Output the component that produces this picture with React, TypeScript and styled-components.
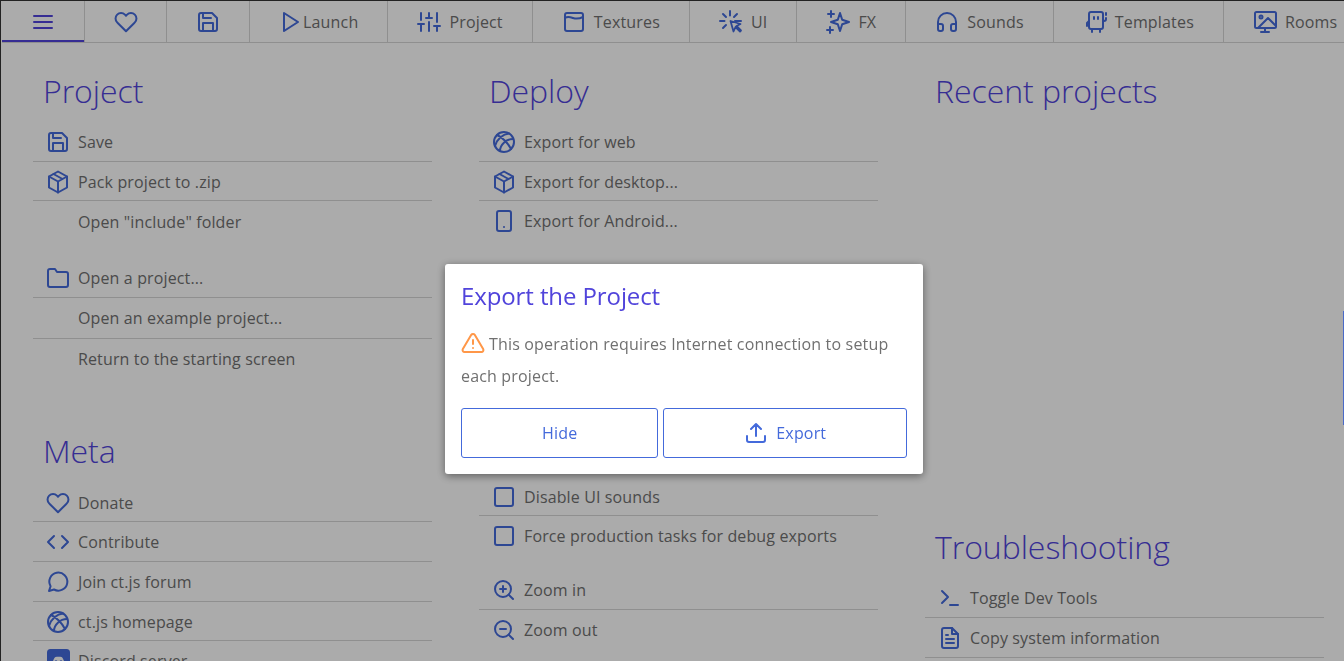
import React from "react";
import styled, { createGlobalStyle } from "styled-components";

const Global = createGlobalStyle`
    html, body {
        margin: 0;
        height: 100%;
        overflow: hidden;
        background: #fff;
    }
    body {
        font-family: "Open Sans", "Liberation Sans", sans-serif;
        font-size: 16px;
        letter-spacing: 0.13px;
        color: #707070;
    }
`

const Frame = styled.div`
    height: 661px;
    overflow: hidden;
    box-sizing: border-box;
    border-top: 1px solid #333;
    border-left: 1px solid #333;
    padding-left: 1px;
`
const Nav = styled.nav`
    display: flex;
    height: 41px;
    border-bottom: 1px solid #d5d5d5;
    box-sizing: content-box;
    white-space: nowrap;
`
const Tab = styled.div<{ $active?: boolean }>`
    display: flex;
    align-items: center;
    gap: 8px;
    flex: none;
    padding: 0 29px;
    border-right: 1px solid #d5d5d5;
    color: #707070;
    box-sizing: border-box;
    height: 41px;
    line-height: 1;
    letter-spacing: 0.17px;
    box-shadow: ${p => p.$active ? "inset 0 -2px 0 #5144db" : "none"};
`
const IconTab = styled(Tab)`
    padding: 0 28.5px 0 29px;
`
const TightTab = styled(Tab)`
    gap: 0;
    padding: 0 29px 0 29.5px;
`
const Columns = styled.main`
    display: grid;
    grid-template-columns: repeat(3, 399px);
    column-gap: 47px;
    padding: 24px 0 0 31px;
`
const Column = styled.div`
    display: flex;
    flex-direction: column;
`
const Heading = styled.h1<{ $top?: number }>`
    margin: ${p => p.$top ?? 0}px 0 7px 10px;
    font-weight: 300;
    font-size: 32px;
    line-height: 48px;
    letter-spacing: -0.05px;
    color: #5144db;
`
const List = styled.ul<{ $top?: number }>`
    list-style: none;
    margin: ${p => p.$top ?? 0}px 0 0;
    padding: 0;
`
const Row = styled.li`
    display: flex;
    align-items: center;
    gap: 8px;
    height: 37.7px;
    box-sizing: content-box;
    padding: 1px 0 0 13px;
    border-bottom: 1px solid #d5d5d5;
    color: #707070;
    line-height: 1;
    &:last-child {
        border-bottom: none;
    }
`
const PlainRow = styled(Row)`
    padding-left: 45px;
    height: 39px;
`
const Blue = styled.svg<{ $color?: string }>`
    width: 24px;
    height: 24px;
    flex: none;
    fill: none;
    stroke: ${p => p.$color ?? "#446adb"};
    stroke-width: 2;
    stroke-linecap: round;
    stroke-linejoin: round;
`
const Overlay = styled.div`
    position: fixed;
    inset: 0;
    background: rgba(0, 0, 0, 0.33);
`
const Thumb = styled.div`
    position: fixed;
    right: 0;
    top: 311px;
    width: 1px;
    height: 114px;
    background: #4a6ac8;
`
const Modal = styled.section`
    position: fixed;
    left: 445px;
    top: 264px;
    width: 478px;
    height: 210px;
    box-sizing: border-box;
    padding: 16px;
    background: #fff;
    border-radius: 3px;
    box-shadow: 0 2px 8px rgba(0, 0, 0, 0.45);
`
const ModalTitle = styled.h2`
    margin: 0;
    font-weight: 400;
    font-size: 24px;
    line-height: 32px;
    letter-spacing: -0.1px;
    color: #5144db;
`
const ModalText = styled.p`
    margin: 16px 0 16px;
    line-height: 32px;
    letter-spacing: 0.17px;
    color: #707070;
    svg {
        vertical-align: -5px;
        margin-right: 4px;
    }
`
const Buttons = styled.div`
    display: flex;
    gap: 5px;
`
const Button = styled.button`
    display: flex;
    align-items: center;
    justify-content: center;
    gap: 8px;
    height: 50px;
    padding: 0 80px;
    background: #fff;
    border: 1px solid #446adb;
    border-radius: 3px;
    color: #446adb;
    font: inherit;
    letter-spacing: 0.17px;
`

type IconProps = { color?: string; children: React.ReactNode };
const Icon = ({ color, children }: IconProps) => (
    <Blue viewBox="0 0 24 24" $color={color}>{children}</Blue>
);

const IconMenu = ({ color }: { color?: string }) => (
    <Icon color={color}><path d="M3 12h18M3 6h18M3 18h18" /></Icon>
);
const IconHeart = () => (
    <Icon><path d="M20.84 4.61a5.5 5.5 0 0 0-7.78 0L12 5.67l-1.06-1.06a5.5 5.5 0 0 0-7.78 7.78l1.06 1.06L12 21.23l7.78-7.78 1.06-1.06a5.5 5.5 0 0 0 0-7.78z" /></Icon>
);
const IconSave = () => (
    <Icon><path d="M19 21H5a2 2 0 0 1-2-2V5a2 2 0 0 1 2-2h11l5 5v11a2 2 0 0 1-2 2z" /><path d="M17 21v-8H7v8M7 3v5h8" /></Icon>
);
const IconPlay = () => (
    <Icon><path d="M5 3l14 9-14 9V3z" /></Icon>
);
const IconSliders = () => (
    <Icon><path d="M4 21v-7M4 10V3M12 21v-9M12 8V3M20 21v-5M20 12V3M1 14h6M9 8h6M17 16h6" /></Icon>
);
const IconTexture = () => (
    <Icon><rect x="3" y="3" width="18" height="18" rx="2" /><path d="M3 8c3-2 5-1 8 0s6 1 10-1" /></Icon>
);
const IconClick = () => (
    <Icon><path d="M11.500 11l3 10.500 2-4.500 4.500 4.500 1-1-4.500-4.500 4-2-10-3z" strokeWidth="1.8" /><path d="M11 1v4.500M1 11h4.500M16 11h6M4 4l3 3M4 18l3-3M18 4l-3 3" /></Icon>
);
const IconSparkles = () => (
    <Icon><path d="M14 3l2.200 6.800L23 12l-6.800 2.200L14 21l-2.200-6.800L5 12l6.800-2.200L14 3z" /><path d="M5 1v6M2 4h6M4 17v6M1 20h6" /></Icon>
);
const IconHeadphones = () => (
    <Icon><path d="M3 18v-6a9 9 0 0 1 18 0v6" /><path d="M21 19a2 2 0 0 1-2 2h-1a2 2 0 0 1-2-2v-3a2 2 0 0 1 2-2h3zM3 19a2 2 0 0 0 2 2h1a2 2 0 0 0 2-2v-3a2 2 0 0 0-2-2H3z" /></Icon>
);
const IconTemplate = () => (
    <Icon><rect x="6" y="2" width="14" height="17" rx="2" /><path d="M11 7v2M15 7v2M9 19v3M17 19v3M6 11l-2 2v3M23 3v2M23 8v1a2 2 0 0 1-2 2" /></Icon>
);
const IconRoom = () => (
    <Icon><rect x="2" y="2" width="21" height="16" rx="1.500" /><circle cx="8" cy="7" r="1.500" /><path d="M5 18l10-10 8 8M12 18v4M8 22h8" /></Icon>
);
const IconGlobe = () => (
    <Icon><circle cx="12" cy="12" r="10" /><path d="M5 5c5 2 11 8 14 14M3 16C5 9 11 4 17 3.500M8 21c0-6 6-12 13-12" /></Icon>
);
const IconBox = () => (
    <Icon><path d="M12 1.500l9 5v11l-9 5-9-5v-11l9-5z" /><path d="M3 6.500l9 5 9-5M12 11.500v11M7.500 4l9 5" /></Icon>
);
const IconPhone = () => (
    <Icon><rect x="5" y="2" width="14" height="20" rx="2" /><path d="M12 18h.01" /></Icon>
);
const IconFolder = () => (
    <Icon><path d="M22 19a2 2 0 0 1-2 2H4a2 2 0 0 1-2-2V5a2 2 0 0 1 2-2h5l2 3h9a2 2 0 0 1 2 2z" /></Icon>
);
const IconCode = () => (
    <Icon><path d="M16 18l6-6-6-6M8 6l-6 6 6 6" /></Icon>
);
const IconChat = () => (
    <Icon><path d="M3 21l1.600-4.800A9 9 0 1 1 8 19.500L3 21z" /></Icon>
);
const IconDiscord = () => (
    <Blue viewBox="0 0 24 24" $color="#446adb">
        <rect x="2" y="1" width="21" height="22" rx="2.500" fill="#446adb" />
        <path d="M6.500 16c0-4 1.500-7 3-8 1.500-.400 4.500-.400 6 0 1.500 1 3 4 3 8-1 1-2.500 1.500-3 1.500l-1-1.500h-4l-1 1.500c-.5 0-2-.5-3-1.500z" fill="#fff" stroke="none" />
        <circle cx="10" cy="12.500" r="1.300" fill="#446adb" stroke="none" />
        <circle cx="15" cy="12.500" r="1.300" fill="#446adb" stroke="none" />
    </Blue>
);
const IconSquare = () => (
    <Icon><rect x="3" y="3" width="18" height="18" rx="2" /></Icon>
);
const IconZoomIn = () => (
    <Icon><circle cx="11" cy="11" r="8" /><path d="M21 21l-4.350-4.350M11 8v6M8 11h6" /></Icon>
);
const IconZoomOut = () => (
    <Icon><circle cx="11" cy="11" r="8" /><path d="M21 21l-4.350-4.350M8 11h6" /></Icon>
);
const IconTerminal = () => (
    <Icon><path d="M4 17l6-6-6-6M12 19h8" /></Icon>
);
const IconFile = () => (
    <Icon><path d="M14 2H6a2 2 0 0 0-2 2v16a2 2 0 0 0 2 2h12a2 2 0 0 0 2-2V8z" /><path d="M14 2v6h6M16 13H8M16 17H8M10 9H8" /></Icon>
);
const IconWarning = () => (
    <Icon color="#ff9748"><path d="M10.290 3.860L1.820 18a2 2 0 0 0 1.710 3h16.940a2 2 0 0 0 1.710-3L13.710 3.860a2 2 0 0 0-3.420 0z" /><path d="M12 9v4M12 17h.01" /></Icon>
);
const IconUpload = () => (
    <Icon><path d="M21 15v4a2 2 0 0 1-2 2H5a2 2 0 0 1-2-2v-4M17 8l-5-5-5 5M12 3v12" /></Icon>
);

function App() {
    return (
        <>
            <Global />
            <Frame>
                <Nav>
                    <IconTab $active><IconMenu color="#5144db" /></IconTab>
                    <IconTab><IconHeart /></IconTab>
                    <IconTab><IconSave /></IconTab>
                    <TightTab><IconPlay />Launch</TightTab>
                    <Tab><IconSliders />Project</Tab>
                    <Tab><IconTexture />Textures</Tab>
                    <Tab><IconClick />UI</Tab>
                    <Tab><IconSparkles />FX</Tab>
                    <Tab><IconHeadphones />Sounds</Tab>
                    <Tab><IconTemplate />Templates</Tab>
                    <Tab><IconRoom />Rooms</Tab>
                </Nav>
                <Columns>
                    <Column>
                        <Heading>Project</Heading>
                        <List>
                            <Row><IconSave />Save</Row>
                            <Row><IconBox />Pack project to .zip</Row>
                            <PlainRow>Open "include" folder</PlainRow>
                        </List>
                        <List $top={16.5}>
                            <Row><IconFolder />Open a project...</Row>
                            <PlainRow>Open an example project...</PlainRow>
                            <PlainRow>Return to the starting screen</PlainRow>
                        </List>
                        <Heading $top={48.5}>Meta</Heading>
                        <List $top={0.6}>
                            <Row><IconHeart />Donate</Row>
                            <Row><IconCode />Contribute</Row>
                            <Row><IconChat />Join ct.js forum</Row>
                            <Row><IconGlobe />ct.js homepage</Row>
                            <Row><IconDiscord />Discord server</Row>
                        </List>
                    </Column>
                    <Column>
                        <Heading>Deploy</Heading>
                        <List>
                            <Row><IconGlobe />Export for web</Row>
                            <Row><IconBox />Export for desktop...</Row>
                            <Row><IconPhone />Export for Android...</Row>
                        </List>
                        <List $top={236.6}>
                            <Row><IconSquare />Disable UI sounds</Row>
                            <Row><IconSquare />Force production tasks for debug exports</Row>
                        </List>
                        <List $top={15.4}>
                            <Row><IconZoomIn />Zoom in</Row>
                            <Row><IconZoomOut />Zoom out</Row>
                        </List>
                    </Column>
                    <Column>
                        <Heading>Recent projects</Heading>
                        <Heading $top={401}>Troubleshooting</Heading>
                        <List $top={0.6}>
                            <Row><IconTerminal />Toggle Dev Tools</Row>
                            <Row><IconFile />Copy system information</Row>
                            <Row />
                        </List>
                    </Column>
                </Columns>
            </Frame>
            <Overlay />
            <Thumb />
            <Modal>
                <ModalTitle>Export the Project</ModalTitle>
                <ModalText><IconWarning />This operation requires Internet connection to setup each project.</ModalText>
                <Buttons>
                    <Button>Hide</Button>
                    <Button><IconUpload />Export</Button>
                </Buttons>
            </Modal>
        </>
    );
}

export default App;
